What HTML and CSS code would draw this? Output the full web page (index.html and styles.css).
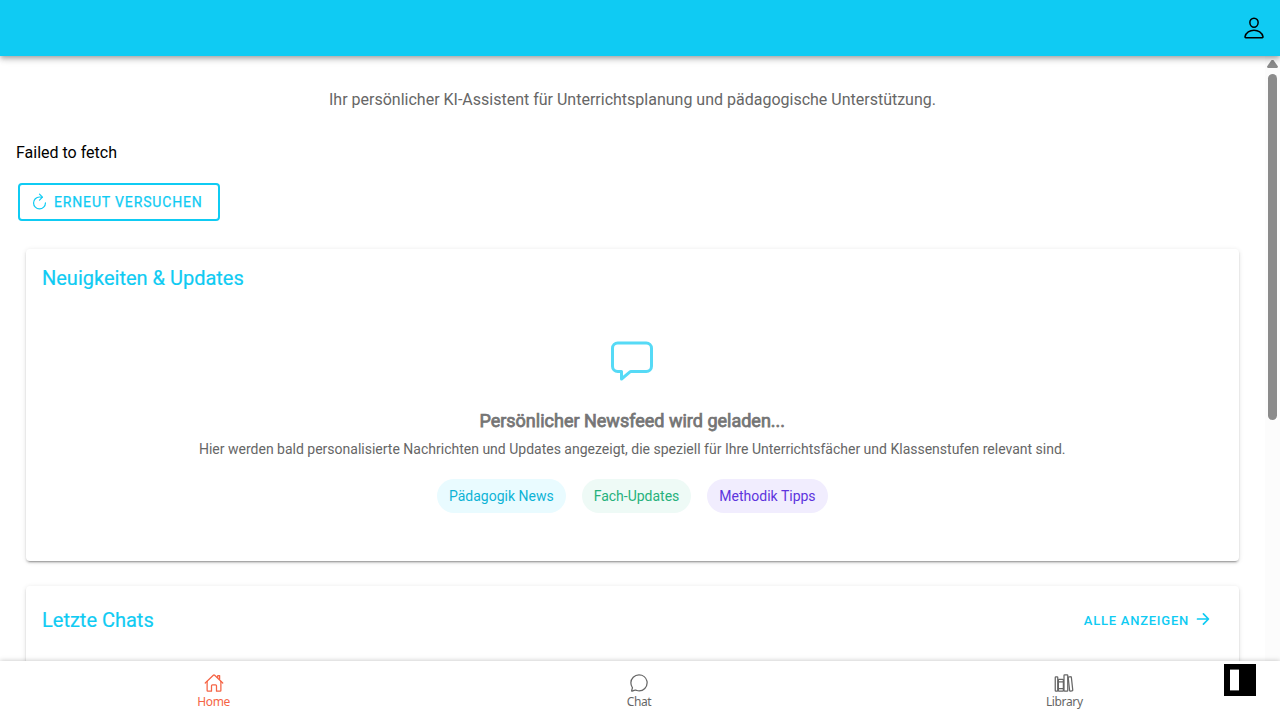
FILE: index.html
```html
<!DOCTYPE html>
<html lang="de">
<head>
<meta charset="utf-8">
<title>Home</title>
<link rel="stylesheet" href="styles.css">
</head>
<body>
<div class="app">
  <header class="header">
    <svg class="icon profile" viewBox="0 0 512 512"><path d="M344 144c-3.92 52.87-44 96-88 96s-84.15-43.12-88-96c-4-55 35-96 88-96s92 42 88 96z"/><path d="M256 304c-87 0-175.3 48-191.64 138.6C62.39 453.52 68.57 464 80 464h352c11.44 0 17.62-10.48 15.65-21.4C431.3 352 343 304 256 304z"/></svg>
  </header>
  <div class="body">
    <main class="content">
      <p class="subtitle">Ihr persönlicher KI-Assistent für Unterrichtsplanung und pädagogische Unterstützung.</p>
      <p class="error">Failed to fetch</p>
      <button class="retry"><svg class="icon" viewBox="0 0 512 512"><path d="M320 146s24.36-12-64-12a160 160 0 10160 160"/><path d="M256 58l80 80-80 80"/></svg><span>Erneut versuchen</span></button>
      <section class="card news">
        <h2>Neuigkeiten &amp; Updates</h2>
        <div class="feed">
          <svg class="icon chatbox" viewBox="0 0 512 512"><path d="M408 64H104a56.16 56.16 0 00-56 56v192a56.16 56.16 0 0056 56h40v80l93.72-78.14a8 8 0 015.13-1.86H408a56.16 56.16 0 0056-56V120a56.16 56.16 0 00-56-56z"/></svg>
          <h3>Persönlicher Newsfeed wird geladen...</h3>
          <p>Hier werden bald personalisierte Nachrichten und Updates angezeigt, die speziell für Ihre Unterrichtsfächer und Klassenstufen relevant sind.</p>
          <div class="chips"><span class="chip cyan">Pädagogik News</span><span class="chip green">Fach-Updates</span><span class="chip violet">Methodik Tipps</span></div>
        </div>
      </section>
      <section class="card chats">
        <h2>Letzte Chats</h2>
        <a class="all"><span>Alle anzeigen</span><svg class="icon" viewBox="0 0 512 512"><path d="M268 112l144 144-144 144M392 256H100"/></svg></a>
      </section>
    </main>
    <div class="scrollbar"><i class="up"></i><i class="thumb"></i></div>
  </div>
  <nav class="tabs">
    <a class="tab active"><svg class="icon" viewBox="0 0 512 512"><path d="M80 212v236a16 16 0 0016 16h96V328a24 24 0 0124-24h80a24 24 0 0124 24v136h96a16 16 0 0016-16V212"/><path d="M480 256L266.89 52c-5-5.28-16.69-5.34-21.78 0L32 256M400 179V64h-48v69"/></svg><span>Home</span></a>
    <a class="tab"><svg class="icon" viewBox="0 0 512 512"><path d="M87.49 380c1.19-4.38-1.44-10.47-3.95-14.86a44.86 44.86 0 00-2.54-3.8 199.81 199.81 0 01-33-110C47.65 139.09 140.73 48 255.83 48 356.21 48 440 117.54 459.58 209.85a199 199 0 014.42 41.64c0 112.41-89.49 204.93-204.59 204.93-18.3 0-43-4.6-56.47-8.37s-26.92-8.77-30.39-10.11a31.09 31.09 0 00-11.12-2.07 30.71 30.71 0 00-12.09 2.43l-67.83 24.48a16 16 0 01-4.67 1.22 9.6 9.6 0 01-9.57-9.74 15.85 15.85 0 01.6-3.29z"/></svg><span>Chat</span></a>
    <a class="tab"><svg class="icon" viewBox="0 0 512 512"><rect x="32" y="96" width="64" height="368" rx="16"/><path d="M112 224h128M112 400h128"/><rect x="112" y="160" width="128" height="304" rx="16"/><rect x="256" y="48" width="96" height="416" rx="16"/><path d="M422.46 96.11l-40.4 4.25c-11.12 1.17-19.18 11.57-17.93 23.1l34.92 321.59c1.26 11.53 11.37 20 22.49 18.84l40.4-4.25c11.12-1.17 19.18-11.57 17.93-23.1L445 115c-1.31-11.58-11.42-20.06-22.54-18.89z"/></svg><span>Library</span></a>
  </nav>
  <div class="widget"><i></i></div>
</div>
</body>
</html>
```
FILE: styles.css
```css
* { box-sizing: border-box; }
body { margin: 0; font-family: Roboto, "Noto Sans", sans-serif; background: #fff; color: #000; }
h2, h3, p { margin: 0; }
.app { position: relative; width: 1280px; height: 720px; display: flex; flex-direction: column; overflow: hidden; }
.icon { fill: none; stroke: currentColor; stroke-width: 32px; stroke-linecap: round; stroke-linejoin: round; flex: none; display: block; }
.header { position: relative; z-index: 2; height: 56px; flex: none; background: #0fcbf3; display: flex; align-items: center; justify-content: flex-end; padding-right: 14px; box-shadow: 0 2px 4px -1px rgba(0,0,0,.2), 0 4px 5px rgba(0,0,0,.14), 0 1px 10px rgba(0,0,0,.12); }
.profile { width: 24px; height: 24px; }
.body { flex: 1; min-height: 0; display: flex; }
.content { flex: 1; min-width: 0; overflow: hidden; padding: 32px 16px 0; display: flex; flex-direction: column; }
.subtitle { font-size: 16px; line-height: 24px; text-align: center; color: #666; flex: none; margin: 0 0 29px; }
.error { font-size: 16px; line-height: 24px; flex: none; }
.retry { align-self: flex-start; flex: none; width: 202px; height: 38px; margin: 18px 2px 0; padding: 0 10px; display: flex; align-items: center; border: 2px solid #0fcbf3; border-radius: 4px; background: none; color: #0fcbf3; font: 400 14px Roboto, sans-serif; letter-spacing: .85px; -webkit-text-stroke: .25px; text-transform: uppercase; white-space: nowrap; }
.retry .icon { width: 19px; height: 19px; margin: -1px 5px 0 0; }
.card { flex: none; margin: 0 10.5px 0 10px; background: #fff; border-radius: 4px; box-shadow: 0 3px 1px -2px rgba(0,0,0,.2), 0 2px 2px rgba(0,0,0,.14), 0 1px 5px rgba(0,0,0,.12); }
.card h2 { font-size: 20px; line-height: 24px; font-weight: 400; -webkit-text-stroke: .2px; color: #0fcbf3; }
.news { height: 312px; margin-top: 28px; padding: 17px 16px; }
.feed { display: flex; flex-direction: column; align-items: center; padding-top: 47px; }
.chatbox { width: 48px; height: 48px; color: #0fcbf3; opacity: .7; }
.feed h3 { font-size: 18px; line-height: 22px; font-weight: 400; -webkit-text-stroke: .75px; color: #757575; margin-top: 25px; }
.feed p { font-size: 14px; line-height: 20px; color: #666; margin-top: 7px; }
.chips { display: flex; gap: 16px; margin-top: 20px; }
.chip { height: 34px; border-radius: 17px; padding: 0 12px; line-height: 34px; font-size: 14px; }
.cyan { background: #e9fbff; color: #0db3d6; }
.green { background: #eefaf6; color: #26b17c; }
.violet { background: #f1edfe; color: #5d34dd; }
.chats { height: 140px; margin-top: 25px; padding: 16px; display: flex; align-items: flex-start; justify-content: space-between; }
.chats h2 { margin-top: 6px; }
.all { display: flex; align-items: center; height: 36px; margin-right: 10.5px; color: #0fcbf3; font-size: 13px; font-weight: 500; letter-spacing: .76px; text-transform: uppercase; }
.all .icon { width: 18px; height: 18px; margin: -2px 0 0 5px; stroke-width: 48px; }
.scrollbar { width: 15px; flex: none; background: #fcfcfc; display: flex; flex-direction: column; align-items: center; padding: 4px 0 0 0; }
.up { width: 11px; height: 8px; background: #8b8b8b; clip-path: polygon(42% 0, 58% 0, 100% 80%, 94% 100%, 6% 100%, 0 80%); }
.thumb { width: 9px; height: 346px; margin-top: 6px; border-radius: 5px; background: #8b8b8b; }
.tabs { position: relative; z-index: 2; height: 59px; flex: none; background: #fff; display: flex; padding: 0 3px 0 1px; box-shadow: 0 0 5px rgba(0,0,0,.25); }
.tab { flex: 1; display: flex; flex-direction: column; align-items: center; padding-top: 12px; color: #666; font: 12px/16px "Noto Sans", sans-serif; letter-spacing: -.35px; }
.tab .icon { width: 20px; height: 20px; margin-bottom: 1px; }
.active { color: #f56445; }
.widget { position: absolute; z-index: 3; right: 24px; bottom: 24px; width: 32px; height: 32px; background: #000; padding: 5px 6px; }
.widget i { display: block; width: 9px; height: 22px; background: #fff; border: solid #666; border-width: 1px 0; }
```
